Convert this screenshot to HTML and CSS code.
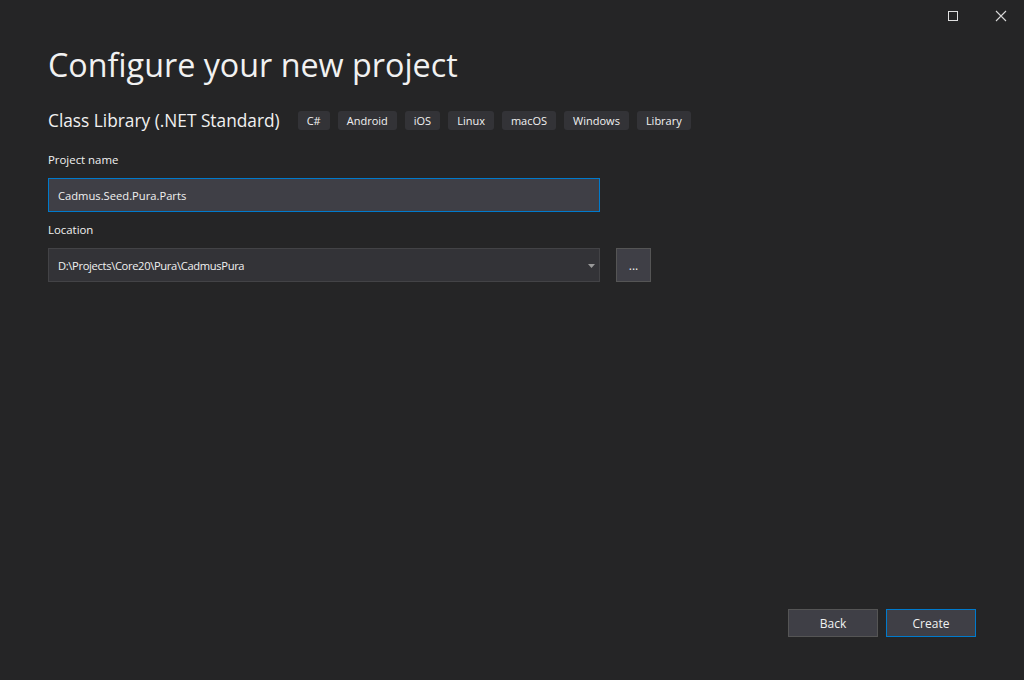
FILE: index.html
```html
<!DOCTYPE html>
<html lang="en">
<head>
<meta charset="utf-8">
<title>Configure your new project</title>
<link rel="stylesheet" href="styles.css">
</head>
<body>
<div class="window">
  <div class="titlebar">
    <div class="ctl">
      <svg width="12" height="12" viewBox="0 0 12 12"><rect x="1.5" y="1.5" width="9" height="9" fill="none" stroke="#e0e0e0" stroke-width="1"/></svg>
    </div>
    <div class="ctl">
      <svg width="12" height="12" viewBox="0 0 12 12"><path d="M1 1L11 11M11 1L1 11" stroke="#d8d8d8" stroke-width="1.1"/></svg>
    </div>
  </div>
  <main class="content">
    <h1 class="title">Configure your new project</h1>
    <div class="subtitle-row">
      <span class="subtitle">Class Library (.NET Standard)</span>
      <div class="tags">
        <span class="tag">C#</span>
        <span class="tag">Android</span>
        <span class="tag">iOS</span>
        <span class="tag">Linux</span>
        <span class="tag">macOS</span>
        <span class="tag">Windows</span>
        <span class="tag">Library</span>
      </div>
    </div>
    <div class="field">
      <label class="label">Project name</label>
      <div class="input focused">Cadmus.Seed.Pura.Parts</div>
    </div>
    <div class="field">
      <label class="label">Location</label>
      <div class="location-row">
        <div class="input combo">
          <span class="path">D:\Projects\Core20\Pura\CadmusPura</span>
          <svg class="arrow" width="7" height="4" viewBox="0 0 7 4"><path d="M0 0H7L3.5 4Z" fill="#9a9a9a"/></svg>
        </div>
        <button class="browse">...</button>
      </div>
    </div>
  </main>
  <footer class="footer">
    <button class="btn">Back</button>
    <button class="btn primary">Create</button>
  </footer>
</div>
</body>
</html>
```
FILE: styles.css
```css
html, body {
  margin: 0;
  padding: 0;
  background: #252526;
}
body {
  font-family: "Open Sans", "Noto Sans", "Liberation Sans", sans-serif;
  color: #f1f1f1;
}
.window {
  width: 1024px;
  height: 680px;
  display: flex;
  flex-direction: column;
  box-sizing: border-box;
}
.titlebar {
  display: flex;
  justify-content: flex-end;
  gap: 2px;
  height: 32px;
}
.ctl {
  width: 46px;
  height: 32px;
  display: flex;
  align-items: center;
  justify-content: center;
}
.content {
  padding: 0 48px;
  flex: 1;
}
.title {
  margin: 10px 0 0 0;
  font-size: 32.3px;
  font-weight: 400;
  line-height: 44px;
  color: #f1f1f1;
}
.subtitle-row {
  display: flex;
  align-items: center;
  margin-top: 24px;
  height: 20px;
}
.subtitle {
  font-size: 17.3px;
  color: #f1f1f1;
  margin-right: 18px;
}
.tags {
  display: flex;
  gap: 8px;
}
.tag {
  background: #333337;
  border-radius: 3px;
  font-size: 11px;
  line-height: 19px;
  height: 19px;
  padding: 0 9px;
  color: #f1f1f1;
}
.field {
  margin-top: 22px;
}
.field + .field {
  margin-top: 10px;
}
.label {
  display: block;
  font-size: 11.4px;
  line-height: 16px;
  color: #f1f1f1;
  margin-bottom: 10px;
}
.input {
  box-sizing: border-box;
  width: 552px;
  height: 34px;
  background: #3f3f46;
  border: 1px solid #434346;
  font-size: 11.2px;
  display: flex;
  align-items: center;
  padding: 0 9px;
  color: #f1f1f1;
}
.input.focused {
  border-color: #007acc;
}
.location-row {
  display: flex;
  gap: 16px;
}
.combo {
  background: #333337;
  border-color: #434346;
  justify-content: space-between;
  padding-right: 4px;
}
.path {
  letter-spacing: -0.35px;
}
.arrow {
  margin-top: 1px;
}
.browse {
  box-sizing: border-box;
  width: 35px;
  height: 34px;
  background: #3f3f46;
  border: 1px solid #555555;
  color: #f1f1f1;
  font-family: inherit;
  font-size: 12px;
  padding: 0;
}
.footer {
  display: flex;
  justify-content: flex-end;
  gap: 8px;
  padding: 0 48px 43px 0;
}
.btn {
  box-sizing: border-box;
  width: 90px;
  height: 28px;
  background: #3f3f46;
  border: 1px solid #555555;
  color: #f1f1f1;
  font-family: inherit;
  font-size: 12px;
  padding: 0;
}
.btn.primary {
  border-color: #007acc;
}
```
